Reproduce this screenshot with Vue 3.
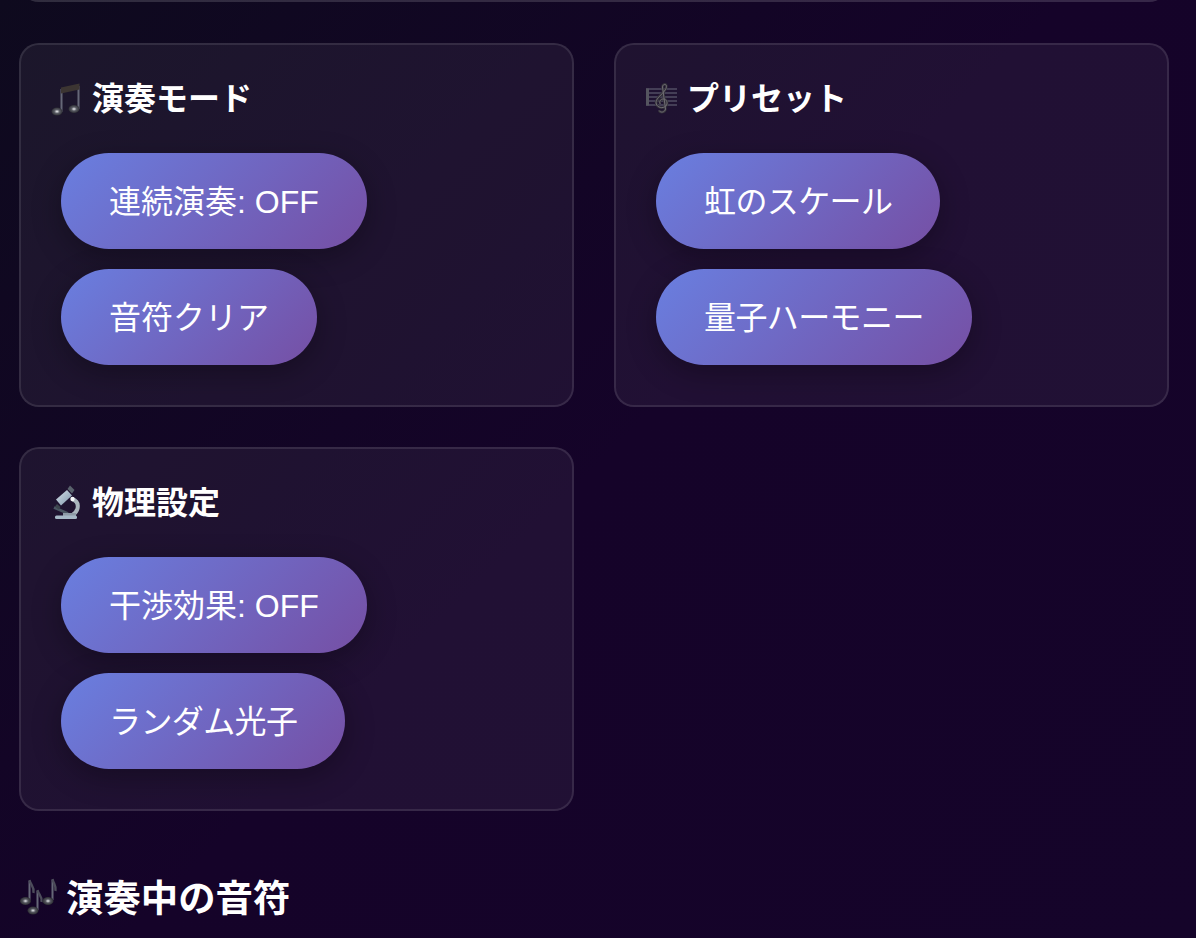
<script setup>
const mode = [
  { label: '連続演奏: OFF', tight: false },
  { label: '音符クリア', tight: false },
]
const preset = [
  { label: '虹のスケール', tight: true },
  { label: '量子ハーモニー', tight: true },
]
const physics = [
  { label: '干渉効果: OFF', tight: false },
  { label: 'ランダム光子', tight: true },
]
</script>

<template>
  <div class="page">
    <div class="top-panel"></div>
    <div class="grid">
      <section class="card">
        <h3 class="title">
          <svg class="emoji" viewBox="0 0 32 32">
            <defs>
              <radialGradient id="h1" cx="0.5" cy="0.5" r="0.6">
                <stop offset="0" stop-color="#eef0f2" />
                <stop offset="0.4" stop-color="#5a5c64" />
                <stop offset="1" stop-color="#1c1c22" />
              </radialGradient>
            </defs>
            <path d="M10.5 6v23M27.5 3v23" stroke="#666878" stroke-width="2" fill="none" />
            <polygon points="10,4.500 28.500,0.500 28.500,6.500 10,10.500" fill="#3c3532" />
            <ellipse cx="6" cy="28.500" rx="5.500" ry="4" fill="url(#h1)" />
            <ellipse cx="23" cy="26" rx="5.500" ry="4" fill="url(#h1)" />
          </svg>
          <span>演奏モード</span>
        </h3>
        <div class="buttons">
          <button v-for="b in mode" :key="b.label" class="btn" :class="{ tight: b.tight }">{{ b.label }}</button>
        </div>
      </section>

      <section class="card">
        <h3 class="title">
          <svg class="emoji" viewBox="0 0 32 32">
            <path d="M0 6h31M0 10h31M0 14h31M0 18h31M0 22h31" stroke="#6a6a7c" stroke-width="1" fill="none" />
            <rect x="0" y="5.500" width="3" height="17" fill="#55555f" />
            <path d="M13 27.500c1.500 2.500 6 2 6.500-1.500L16.500 4c0-2.500 3-3.500 3.800-1.500.9 2.500-2 6-5.500 9.500-3 3-5.500 5.500-4.500 9 1 3.500 6.500 5 9.500 2 2.500-2.500 1-7-2.500-7-3 0-4.500 3-3 5" stroke="#34323a" stroke-width="2.600" fill="none" />
            <path d="M13 27.500c1.500 2.500 6 2 6.500-1.500L16.500 4c0-2.500 3-3.500 3.800-1.500.9 2.500-2 6-5.500 9.500-3 3-5.500 5.500-4.500 9 1 3.500 6.500 5 9.500 2 2.500-2.500 1-7-2.500-7-3 0-4.500 3-3 5" stroke="#77737a" stroke-width="0.900" fill="none" />
          </svg>
          <span>プリセット</span>
        </h3>
        <div class="buttons">
          <button v-for="b in preset" :key="b.label" class="btn" :class="{ tight: b.tight }">{{ b.label }}</button>
        </div>
      </section>

      <section class="card">
        <h3 class="title">
          <svg class="emoji" viewBox="0 0 32 32">
            <defs>
              <linearGradient id="tube" x1="0" y1="0" x2="1" y2="1">
                <stop offset="0" stop-color="#d6e2ea" />
                <stop offset="1" stop-color="#7d94aa" />
              </linearGradient>
            </defs>
            <path d="M21 12c4.500 1.500 6.500 5 5.500 9.500-.7 3-2.500 5-5.500 7" stroke="#aab6be" stroke-width="4" fill="none" />
            <path d="M3 20.500l14 6" stroke="#4a5662" stroke-width="2.800" fill="none" />
            <path d="M12 27.500h13" stroke="#8d9aa6" stroke-width="3" fill="none" />
            <rect x="4" y="28.500" width="22" height="3.500" rx="1.500" fill="#a6b8c6" />
            <polygon points="5,12.500 16,3 21,8.500 10,18.500" fill="url(#tube)" />
            <polygon points="16.500,2 19,-1.500 23.500,3 21,6.500" fill="#59626c" />
            <polygon points="6,17 9.500,20 7.500,22.500 4,19.500" fill="#3c444d" />
            <circle cx="21.500" cy="12" r="2.200" fill="#f7f9fa" />
          </svg>
          <span>物理設定</span>
        </h3>
        <div class="buttons">
          <button v-for="b in physics" :key="b.label" class="btn" :class="{ tight: b.tight }">{{ b.label }}</button>
        </div>
      </section>
    </div>

    <h2 class="playing">
      <svg class="emoji-large" viewBox="0 0 38 38">
        <defs>
          <radialGradient id="h2" cx="0.5" cy="0.5" r="0.6">
            <stop offset="0" stop-color="#e6e9ec" />
            <stop offset="0.4" stop-color="#54565e" />
            <stop offset="1" stop-color="#1b1b20" />
          </radialGradient>
        </defs>
        <path d="M10.500 4v19M18.500 14v19M33.500 3v20" stroke="#666878" stroke-width="2" fill="none" />
        <path d="M10.500 3c1 5 5 6 4 13M18.500 13c1 5 5 6 4 12M33.500 2c1 5 4 6 3 12" stroke="#4c4c5a" stroke-width="2.400" fill="none" />
        <ellipse cx="6.500" cy="24" rx="5.500" ry="4" fill="url(#h2)" />
        <ellipse cx="14" cy="33.500" rx="5.500" ry="4" fill="url(#h2)" />
        <ellipse cx="29" cy="24" rx="5.500" ry="4" fill="url(#h2)" />
      </svg>
      <span>演奏中の音符</span>
    </h2>
  </div>
</template>

<style>
html,
body {
  margin: 0;
  background: #15032a;
}
</style>

<style scoped>
.page {
  box-sizing: border-box;
  height: 938px;
  overflow: hidden;
  padding: 0 27px 0 19px;
  background: linear-gradient(135deg, #0e0a1e 0%, #150329 50%, #15042a 100%);
  font-family: "Liberation Sans", "Noto Sans CJK JP", sans-serif;
  color: #fff;
}

.top-panel {
  height: 60px;
  margin-top: -58px;
  margin-bottom: 41px;
  box-sizing: border-box;
  border: 2px solid rgba(255, 255, 255, 0.1);
  border-radius: 20px;
  background: rgba(255, 255, 255, 0.05);
}

.grid {
  display: grid;
  grid-template-columns: 1fr 1fr;
  gap: 40px;
}

.card {
  box-sizing: border-box;
  height: 364px;
  padding: 30px;
  border: 2px solid rgba(255, 255, 255, 0.1);
  border-radius: 20px;
  background: rgba(255, 255, 255, 0.055);
}

.title {
  display: flex;
  align-items: center;
  gap: 9px;
  height: 48px;
  margin: 0 0 20px;
  font-size: 32px;
  font-weight: 700;
  line-height: 48px;
}

.emoji {
  width: 32px;
  height: 32px;
  flex: none;
  overflow: visible;
}

.buttons {
  display: flex;
  flex-wrap: wrap;
  gap: 20px;
  padding: 10px;
}

.btn {
  height: 96px;
  padding: 0 48px 4px;
  border: none;
  border-radius: 48px;
  background: linear-gradient(135deg, #697fe0 0%, #764fa4 100%);
  box-shadow: 0 8px 30px rgba(0, 0, 0, 0.3);
  color: #fff;
  font-family: inherit;
  font-size: 32px;
}

.btn.tight {
  letter-spacing: -0.6px;
}

.playing {
  display: flex;
  align-items: center;
  gap: 9px;
  height: 58px;
  margin: 56px 0 0;
  font-size: 37.4px;
  font-weight: 700;
}

.emoji-large {
  width: 38px;
  height: 38px;
  flex: none;
  overflow: visible;
}
</style>
